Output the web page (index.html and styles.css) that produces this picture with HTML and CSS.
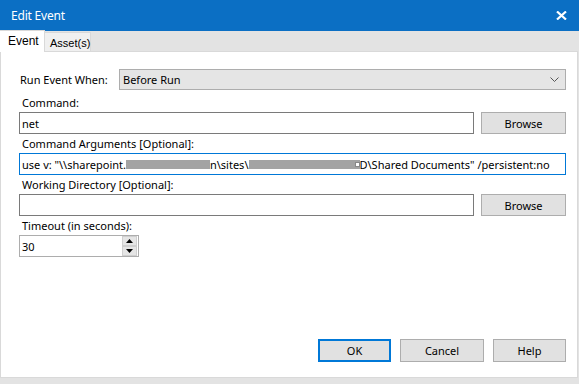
FILE: index.html
```html
<!DOCTYPE html>
<html>
<head>
<meta charset="utf-8">
<link rel="stylesheet" href="styles.css">
</head>
<body>
<div class="window">
  <div class="titlebar">
    <span class="title">Edit Event</span>
    <svg class="close" width="11" height="9" viewBox="0 0 11 9"><path d="M1 0.5 L10 8.5 M10 0.5 L1 8.5" stroke="#fff" stroke-width="2.2" fill="none"/></svg>
  </div>
  <div class="tabstrip">
    <div class="tab tab-active">Event</div>
    <div class="tab tab-inactive">Asset(s)</div>
  </div>
  <div class="panel">
    <div class="row-when">
      <span class="when-label">Run Event When:</span>
      <div class="select">
        <span>Before Run</span>
        <svg width="9" height="6" viewBox="0 0 9 6"><path d="M0.5 0.5 L4.5 4.5 L8.5 0.5" stroke="#555" stroke-width="1" fill="none"/></svg>
      </div>
    </div>
    <div class="field field-first">
      <div class="label">Command:</div>
      <div class="ctl-row">
        <div class="input input-short">net</div>
        <div class="btn btn-browse">Browse</div>
      </div>
    </div>
    <div class="field">
      <div class="label">Command Arguments [Optional]:</div>
      <div class="input input-full input-focus">use v: "\\sharepoint.<span class="redact r1"></span>n\sites\<span class="redact r2"><span class="sq"></span></span>D\Shared Documents" /persistent:no</div>
    </div>
    <div class="field">
      <div class="label">Working Directory [Optional]:</div>
      <div class="ctl-row">
        <div class="input input-short"></div>
        <div class="btn btn-browse">Browse</div>
      </div>
    </div>
    <div class="field">
      <div class="label">Timeout (in seconds):</div>
      <div class="spinner">
        <span class="spin-val">30</span>
        <div class="spin-btns">
          <div class="spin-btn"><svg width="7" height="4" viewBox="0 0 7 4"><path d="M3.5 0 L7 4 L0 4 Z" fill="#000"/></svg></div>
          <div class="spin-btn"><svg width="7" height="4" viewBox="0 0 7 4"><path d="M0 0 L7 0 L3.5 4 Z" fill="#000"/></svg></div>
        </div>
      </div>
    </div>
    <div class="actions">
      <div class="btn btn-ok">OK</div>
      <div class="btn btn-cancel">Cancel</div>
      <div class="btn btn-help">Help</div>
    </div>
  </div>
</div>
</body>
</html>
```
FILE: styles.css
```css
* { box-sizing: border-box; }
html, body { margin: 0; padding: 0; }
body {
  width: 579px;
  height: 384px;
  overflow: hidden;
  background: #e3e3e3;
  font-family: "Noto Sans", "Open Sans", sans-serif;
  font-size: 11px;
  color: #000;
}
.window {
  width: 579px;
  height: 384px;
  display: flex;
  flex-direction: column;
  background: #e3e3e3;
}
.titlebar {
  height: 31px;
  background: #0b6fc4;
  display: flex;
  align-items: center;
  justify-content: space-between;
  padding: 0 12px 0 11px;
  color: #fff;
}
.title { font-size: 12px; letter-spacing: -0.2px; }
.tabstrip {
  height: 21px;
  display: flex;
  align-items: flex-end;
  border-bottom: 1px solid #d9d9d9;
  width: 578px;
}
.tab {
  font-family: "Liberation Sans", Arial, sans-serif;
  color: #000;
  display: flex;
  align-items: center;
}
.tab-active {
  width: 45px;
  height: 22px;
  margin-bottom: -1px;
  background: #fff;
  border: 1px solid #d9d9d9;
  border-bottom: none;
  border-left: none;
  font-size: 12px;
  padding: 0 0 2px 8px;
}
.tab-inactive {
  width: 46px;
  height: 19px;
  background: #f0f0f0;
  border: 1px solid #d9d9d9;
  border-left: none;
  border-bottom: none;
  font-size: 11px;
  padding: 1px 0 0 5px;
}
.panel {
  width: 578px;
  height: 326px;
  background: #fff;
  border: 1px solid #d9d9d9;
  border-top: none;
  padding: 17px 11px 0 18px;
  display: flex;
  flex-direction: column;
}
.row-when {
  display: flex;
  align-items: center;
  height: 21px;
}
.when-label { width: 100px; padding-left: 1px; }
.select {
  width: 447px;
  height: 21px;
  background: #e5e5e5;
  border: 1px solid #adadad;
  display: flex;
  align-items: center;
  justify-content: space-between;
  padding: 0 6px 0 3px;
}
.field { display: flex; flex-direction: column; }
.field-first { margin-top: 3px; }
.label {
  height: 19px;
  line-height: 16px;
  padding: 2px 0 0 3px;
}
.ctl-row { display: flex; gap: 7px; }
.input {
  height: 22px;
  border: 1px solid #7a7a7a;
  display: flex;
  align-items: center;
  padding-left: 2px;
  white-space: nowrap;
  overflow: hidden;
}
.input-short { width: 455px; }
.input-full { width: 547px; }
.input-focus { border-color: #0078d7; }
.redact {
  display: inline-block;
  height: 9px;
  background: #a3a3a3;
  position: relative;
}
.r1 { width: 84px; }
.r2 { width: 111px; }
.sq {
  position: absolute;
  right: 0;
  top: 2px;
  width: 5px;
  height: 5px;
  background: #fff;
  border: 1px solid #888;
}
.btn {
  height: 22px;
  background: #e1e1e1;
  border: 1px solid #adadad;
  display: flex;
  align-items: center;
  justify-content: center;
}
.btn-browse { width: 85px; }
.spinner {
  width: 120px;
  height: 22px;
  border: 1px solid #adadad;
  display: flex;
  justify-content: space-between;
  align-items: center;
  padding: 0 1px 0 2px;
}
.spin-btns {
  display: flex;
  flex-direction: column;
  width: 15px;
  height: 20px;
}
.spin-btn {
  flex: 1;
  background: #e5e5e5;
  border: 1px solid #cfcfcf;
  display: flex;
  align-items: center;
  justify-content: center;
}
.actions {
  margin-top: auto;
  margin-bottom: 15px;
  display: flex;
  justify-content: flex-end;
  gap: 9px;
}
.actions .btn { height: 23px; }
.btn-ok { width: 73px; border: 2px solid #0078d7; }
.btn-cancel { width: 84px; }
.btn-help { width: 73px; }
```
